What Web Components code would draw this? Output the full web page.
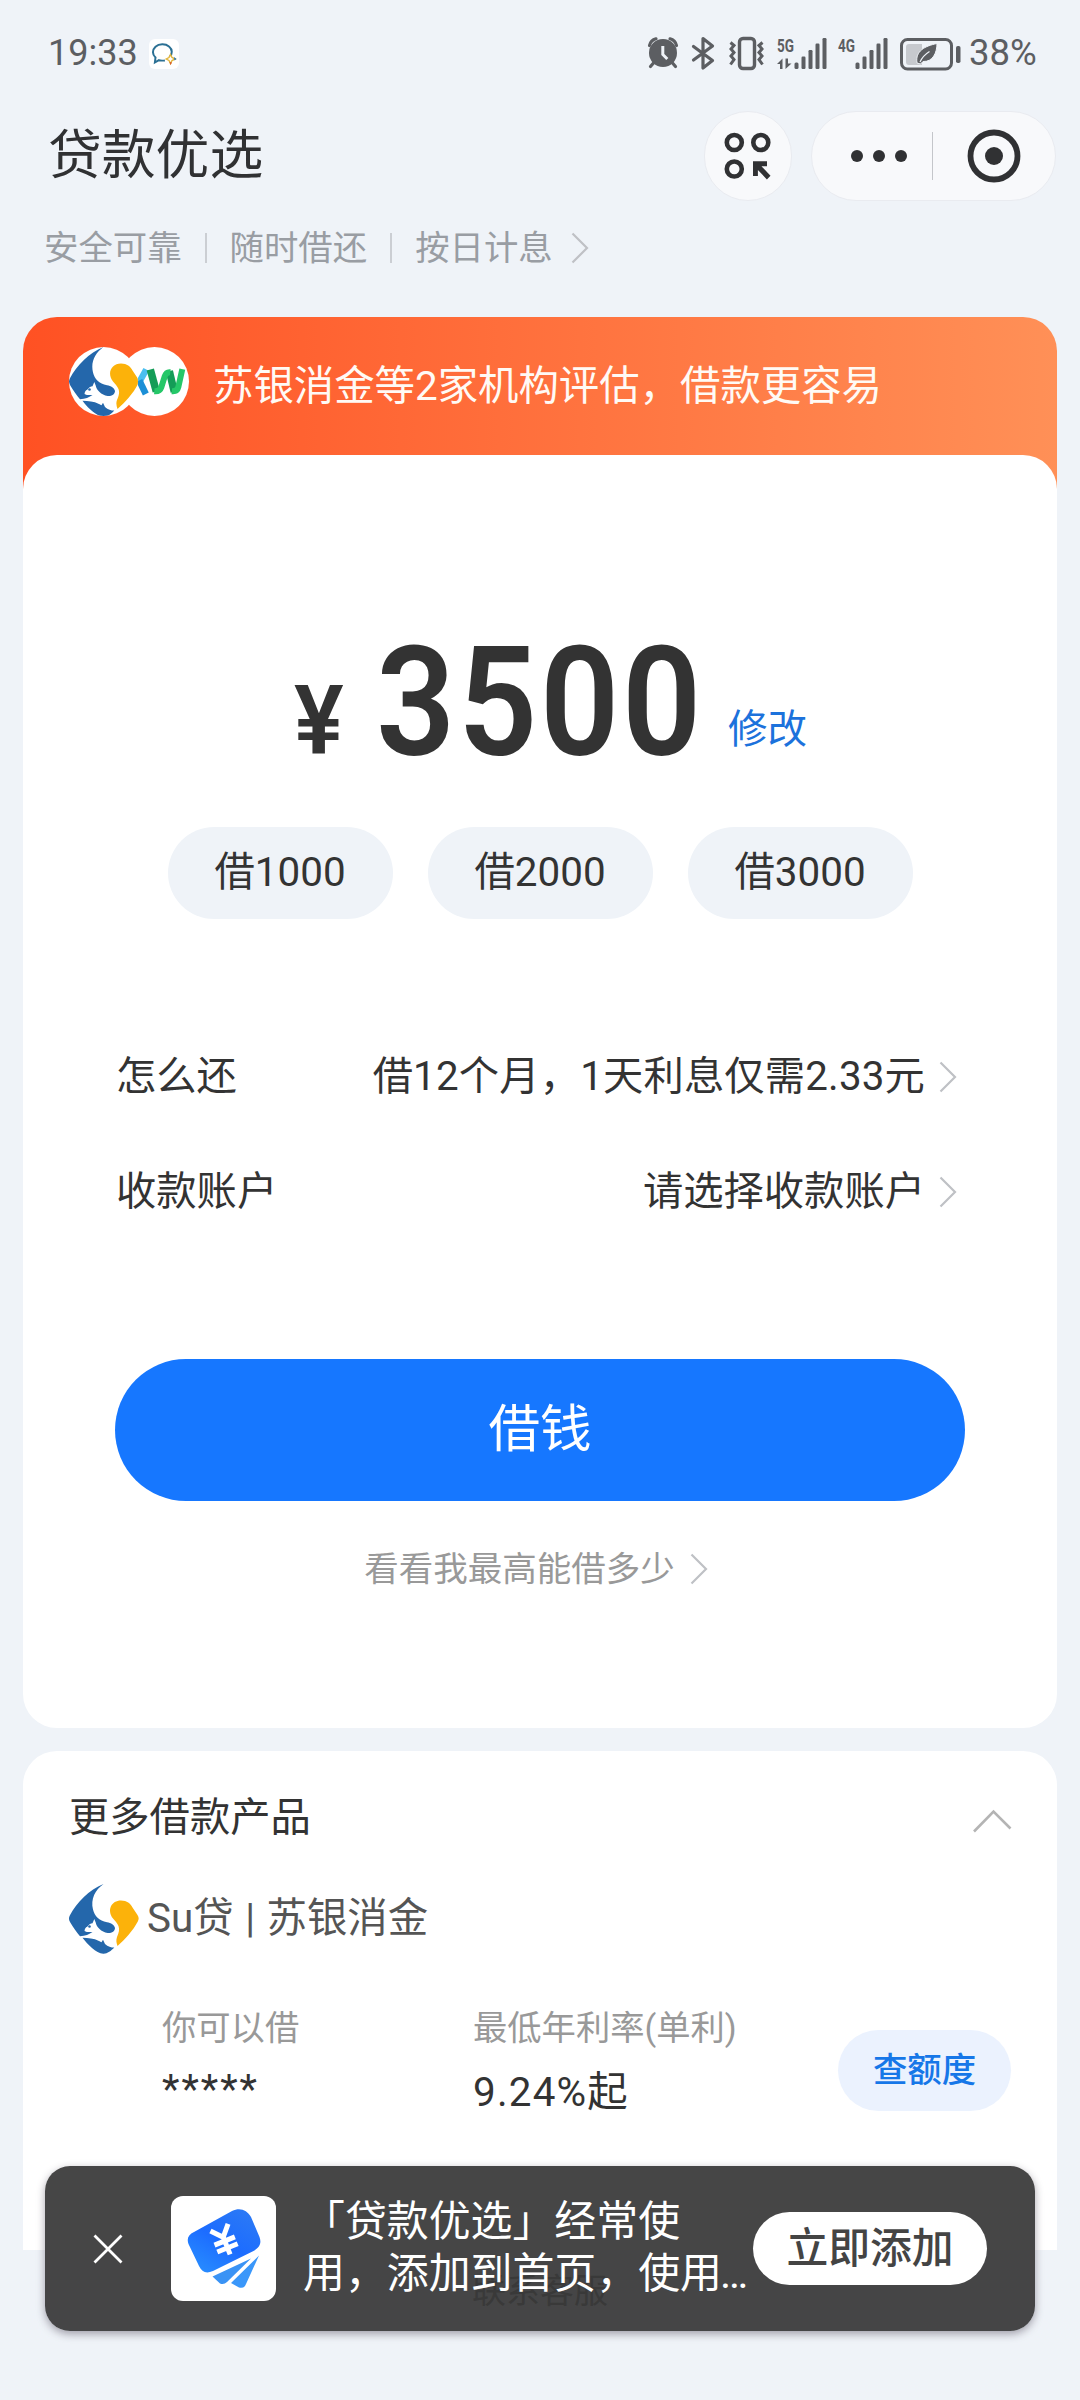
<!DOCTYPE html>
<html lang="zh-CN">
<head>
<meta charset="utf-8">
<title>贷款优选</title>
<style>
html,body{margin:0;padding:0}
body{width:1080px;height:2400px;overflow:hidden;background:#eff3f8;color:#333;font-family:Roboto,"Noto Sans CJK SC",sans-serif}
</style>
</head>
<body>
<loan-app></loan-app>
<script>
const define=(name,css,html)=>customElements.define(name,class extends HTMLElement{
  constructor(){
    super();
    this.attachShadow({mode:'open'}).innerHTML=`<style>*{box-sizing:border-box}:host{display:block;box-sizing:border-box}svg{display:block}${css}</style>${html}`;
  }
});

const bars=`<g fill="#5c5e62"><rect x="17.5" y="26.500" width="4" height="6.500" rx="1.500"/><rect x="24.500" y="20.500" width="4" height="12.500" rx="1.200"/><rect x="31.500" y="14" width="4" height="19" rx="1.200"/><rect x="38.500" y="7.500" width="4" height="25.500" rx="1.200"/><rect x="45.500" y="2" width="4" height="31" rx="1.200"/></g>`;
const netText=t=>`<text x="0" y="15.500" font-family="Roboto" font-weight="700" font-size="18.500" textLength="17" lengthAdjust="spacingAndGlyphs" fill="#5c5e62">${t}</text>`;

const icons={
  chat:[30,30,`<rect width="30" height="30" rx="6" fill="#fff"/><path d="M20.500 18.500c3-3.500 3.200-8-.5-11-3.500-3-10-3-13.500.2-3.600 3.300-3.200 8 0 10.800l-.6 5 4-2.300c2 .6 4 .5 6 .2" fill="none" stroke="#2b7094" stroke-width="2"/><path d="M21.500 15.500l1.500 3 3.200 1.500-3.200 1.500-1.500 3.200-1.500-3.200-2.800-1.500 2.800-1.500z" fill="#fff" stroke="#e2b53c" stroke-width="1.400"/><path d="M25 18l2.500 2-2 1.500z" fill="#2378b8"/><path d="M20.500 23l1 3 1.500-2.500z" fill="#d6582e"/>`],
  alarm:[30,34,`<circle cx="15" cy="17" r="14" fill="#5c5e62"/><path d="M1.500 9.500A9 9 0 0 1 8 2.800M28.500 9.500A9 9 0 0 0 22 2.800" fill="none" stroke="#5c5e62" stroke-width="3.200" stroke-linecap="round"/><path d="M5.500 27l-3 3.500M24.500 27l3 3.500" stroke="#5c5e62" stroke-width="3.200" stroke-linecap="round"/><path d="M14.800 10v8.500l4.500 4.500" fill="none" stroke="#eff3f8" stroke-width="3"/>`],
  bluetooth:[23,34,`<path d="M1.500 10.500l19 14L11 32V2.500l9.500 7.500L1.500 24" fill="none" stroke="#5c5e62" stroke-width="3.200" stroke-linejoin="round" stroke-linecap="round"/>`],
  vibrate:[37,34,`<rect x="11.500" y="2.500" width="15" height="30" rx="3.500" fill="none" stroke="#5c5e62" stroke-width="3.400"/><path d="M2.500 6.500l3.500 3-3 3.500 3 3.500-3 3.500 3 3.500-3.500 5M34.500 6.500l-3.500 3 3 3.500-3 3.500 3 3.500-3 3.500 3.500 5" fill="none" stroke="#5c5e62" stroke-width="3"/>`],
  net5:[50,34,netText('5G')+bars+`<path d="M0 28l5.500-5.500V33H3v-5zM8.500 22.500v10.500l6-5.500h-3.500v-5z" fill="#5c5e62"/>`],
  net4:[50,34,netText('4G')+bars],
  battery:[61,34,`<rect x="1.500" y="3.500" width="50" height="29.500" rx="6" fill="none" stroke="#5c5e62" stroke-width="3"/><path d="M9 8h13v21H9a3 3 0 0 1-3-3V11a3 3 0 0 1 3-3z" fill="#c6c9ce"/><path d="M37 7.500c0 9-4 18.500-14 18l-2.500 2.500-3.500-1c-2-12 8-17 20-19.500z" fill="#5c5e62" stroke="#eff3f8" stroke-width="1"/><path d="M20 26c2-4.500 5.500-8 9.500-10.500" fill="none" stroke="#eff3f8" stroke-width="1.200"/><rect x="56" y="10" width="4.500" height="17" rx="1.800" fill="#5c5e62"/>`],
  scan:[48,48,`<g fill="none" stroke="#303133" stroke-width="4.600"><circle cx="10.300" cy="10.500" r="7.500"/><circle cx="36.800" cy="10.500" r="7.500"/><circle cx="10.300" cy="37" r="7.500"/></g><path d="M29 29.300h14v5h-5.500l9 9.500-3.600 3.600-9-9.500v6H29z" fill="#303133"/>`],
  more:[58,14,`<g fill="#303133"><circle cx="7" cy="7" r="6"/><circle cx="29" cy="7" r="6"/><circle cx="51" cy="7" r="6"/></g>`],
  target:[54,54,`<circle cx="27" cy="27" r="23.500" fill="none" stroke="#303133" stroke-width="5.800"/><circle cx="27" cy="27" r="9" fill="#303133"/>`],
  right:[18,32,`<path d="M1.500 1.500L16 16 1.500 30.500" fill="none" stroke="#bfc1c5" stroke-width="2.200"/>`],
  up:[38,24,`<path d="M1 22.500L20.500 2.500 37.500 19.500" fill="none" stroke="#b4b4b4" stroke-width="2.600"/>`],
  close:[30,30,`<path d="M1.500 1.500l27 27M28.500 1.500l-27 27" stroke="#fff" stroke-width="2.800"/>`],
  suyin:[70,70,`<path d="M34.500 0C20 6 8 18 .8 31.500c-1.300 2.300-1 4.800.5 7C4 43 7.500 48 11 52.300c5-.3 9.500-2 12.500-4.300-3 .2-6 .3-8-1 .3-2 1-3.700 3-4.500 1-1.800 3-3 5-3.200l1.800-4.300 1.400 3.500c.8 4.500 5.500 9.500 12 10.500 4 .3 7.300-1.800 7.300-5-.5-3-4-5-8-5.700C30 36.500 25.500 32 24 25.500 21.500 15 26 6 34.500 0z" fill="#2467ab"/><circle cx="20.500" cy="42.500" r="1.300" fill="#2467ab"/><path d="M13.500 53.800c6 .2 11 .4 16.500 3.200l2.500 1.200 1.500-2.500 2 4.200c3 2.800 6 3.600 9.300 3.700-3.300 3.400-7 6.400-11 6.200C27 69.200 18.500 60.500 13.500 53.800z" fill="#2467ab"/><path d="M52 16.500c6 0 9.500 3 11.500 7l5 7.500c1.500 2.300 1.500 4.200.3 6.500C64 46.500 56.500 55 48.500 62c-1-3-1.700-5.500-.5-9 1.800-4 2.800-7.500 1.500-11-1.200-3-3.500-5-5.500-7.500C37.500 26 42.500 16.500 52 16.500z" fill="#fcb20a"/>`],
  xw:[69,69,`<g transform="translate(-119.200 -347)" fill="none"><path d="M145.500 369.500l-7 12.500" stroke="#4abff0" stroke-width="6.500"/><path d="M138.500 380.500l6.500 13.500" stroke="#1b8fd6" stroke-width="6.500"/><path d="M149.500 369.500l6 22" stroke="#149c57" stroke-width="7.500"/><path d="M168.500 371l5 21" stroke="#149c57" stroke-width="7.500"/><path d="M153.500 391.200q5.500.5 7-4l3.500-11q1.500-4.500 5.500-4" stroke="#25c768" stroke-width="6"/><path d="M171 391.200q5.500.5 6.500-4l4-18" stroke="#25c768" stroke-width="6"/></g>`],
  loan:[105,105,`<defs><linearGradient id="g" x1="0" y1="1" x2=".7" y2="0"><stop offset="0" stop-color="#2a92ff"/><stop offset=".55" stop-color="#1c6cff"/><stop offset="1" stop-color="#2a78f6"/></linearGradient></defs><rect width="105" height="105" rx="12" fill="#fff"/><path d="M41.500 80.500L80 62.500 56 86q-3 3-7 1.500z" fill="#3a93f5"/><path d="M60 87L88 59.500 75 88q-2 5-7 3.500z" fill="#3a97fa"/><path d="M23 36L61 15c8-4 15-1 19 6l8.500 20c2.500 7-.5 11-6 14L42 75c-7 3-11 1-14-5L17.500 48c-2-5.500 0-9.500 5.500-12z" fill="url(#g)"/><g transform="translate(53.500 44.500) rotate(-22)" fill="none" stroke="#fff" stroke-width="5"><path d="M-9.500-14L0-3.500 9.500-14M0-4v19M-11 .5h22M-11 8h22"/></g>`]
};
customElements.define('ui-icon',class extends HTMLElement{
  constructor(){super();this.attachShadow({mode:'open'})}
  connectedCallback(){
    const [w,h,body]=icons[this.getAttribute('name')];
    this.shadowRoot.innerHTML=`<style>:host{display:block;flex:none;width:${w}px;height:${h}px}svg{display:block;overflow:visible}</style><svg width="${w}" height="${h}" viewBox="0 0 ${w} ${h}">${body}</svg>`;
  }
});

define('status-bar',`:host{height:104px;display:flex;align-items:center;padding:1px 43px 0 48px;font-size:36px;line-height:40px;color:#5c5e62}
.time{width:101px}.sys{margin-left:auto;display:flex;align-items:center}.sys ui-icon{margin-right:14px}.sys .n{margin-right:11px}.sys .v{margin-right:12px}.sys .b{margin-right:8px}.pct{width:68px;white-space:nowrap;font-size:36.500px}ui-icon.chat{margin-top:2px}`,
`<div class="time">19:33</div><ui-icon class="chat" name="chat"></ui-icon>
<div class="sys"><ui-icon name="alarm"></ui-icon><ui-icon name="bluetooth" style="margin-right:13px"></ui-icon><ui-icon class="v" name="vibrate"></ui-icon><ui-icon class="n" name="net5"></ui-icon><ui-icon class="v" name="net4"></ui-icon><ui-icon class="b" name="battery"></ui-icon><div class="pct">38%</div></div>`);

define('title-bar',`:host{height:103px;display:flex;align-items:center;padding:0 24px 0 48px}
h1{margin:0 auto 0 0;font-size:53.8px;line-height:70px;font-weight:400;color:#303133}
.round,.pill{height:90px;border-radius:45px;background:#f8f9fb;border:1px solid #e9ebf0;display:flex;align-items:center}
.round{width:88px;justify-content:center}.pill{width:245px;margin-left:19px;padding:0 34px 0 38px;justify-content:space-between}
.pill i{width:1px;height:48px;background:#c4c6ca;margin-left:-11px}`,
`<h1><slot></slot></h1><div class="round"><ui-icon name="scan"></ui-icon></div><div class="pill"><ui-icon name="more"></ui-icon><i></i><ui-icon name="target"></ui-icon></div>`);

define('tag-line',`:host{height:83px;display:flex;align-items:center;padding:0 0 2px 44px;font-size:34.400px;line-height:40px;color:#999da3}
i{width:2px;height:30px;background:#cbced3;margin:0 23px}ui-icon{margin-left:18px}`,
`<span>安全可靠</span><i></i><span>随时借还</span><i></i><span>按日计息</span><ui-icon name="right"></ui-icon>`);

define('offer-banner',`:host{height:138px;display:flex;align-items:center;padding-left:46px;color:#fffaf5;font-size:40.400px;line-height:50px}
.logos{display:flex;margin-bottom:9px}.logos span{width:69px;height:69px;border-radius:50%;background:#fff;overflow:hidden}.logos span+span{margin-left:-18px}
p{margin:2px 0 0 24px}`,
`<div class="logos"><span style="z-index:1"><ui-icon name="suyin"></ui-icon></span><span><ui-icon name="xw"></ui-icon></span></div><p><slot></slot></p>`);

define('loan-amount',`:host{display:flex;align-items:flex-end;height:152px;padding-left:271px}
span,b{display:block;white-space:nowrap;transform-origin:0 50%}
.yen{width:82px;font-size:97px;line-height:97px;font-weight:600;margin-bottom:7.700px;transform:scaleX(.96)}
b{width:352px;font-size:152px;line-height:152px;font-weight:600;letter-spacing:3px;margin-bottom:-1px;transform:scaleX(.913)}
a{font-size:39.500px;line-height:40px;margin-bottom:28px;color:#1c72dc}`,
`<span class="yen">¥</span><b><slot></slot></b><a>修改</a>`);

define('amount-chip',`:host{width:225px;height:92px;border-radius:46px;background:#eff3f8;display:flex;align-items:center;justify-content:center;font-size:40.400px;line-height:50px}`,`<slot></slot>`);

define('info-row',`:host{height:115px;display:flex;align-items:center;justify-content:space-between;font-size:40.300px;line-height:50px}
div{display:flex;align-items:center;gap:14px}::slotted(.tight){letter-spacing:.17px}`,
`<slot name="label"></slot><div><slot></slot><ui-icon name="right"></ui-icon></div>`);

define('primary-button',`:host{height:142px;border-radius:71px;background:#1677ff;color:#fff;display:flex;align-items:center;justify-content:center;font-size:51.600px;line-height:60px}`,`<slot></slot>`);

define('more-link',`:host{height:60px;display:flex;align-items:center;justify-content:center;gap:15px;font-size:34.500px;line-height:44px;color:#999}`,`<slot></slot><ui-icon name="right"></ui-icon>`);

define('loan-card',`:host{margin:27px 23px 0;border-radius:34px 34px 0 0;background:linear-gradient(90deg,#ff5123,#ff9057) no-repeat 0 0/100% 190px}
.body{height:1273px;border-radius:34px;background:#fff;padding-top:171px}
.chips{display:flex;justify-content:center;gap:35px;margin-top:49px}
.rows{padding:0 100px 0 93px;margin-top:100px}primary-button{margin:110px 92px 0}more-link{margin:38px 8px 0 0}`,
`<offer-banner>苏银消金等2家机构评估，借款更容易</offer-banner>
<div class="body"><loan-amount>3500</loan-amount>
<div class="chips"><amount-chip>借1000</amount-chip><amount-chip>借2000</amount-chip><amount-chip>借3000</amount-chip></div>
<div class="rows"><info-row><span slot="label">怎么还</span><span class="tight">借12个月，1天利息仅需2.33元</span></info-row><info-row><span slot="label">收款账户</span><span>请选择收款账户</span></info-row></div>
<primary-button>借钱</primary-button><more-link>看看我最高能借多少</more-link></div>`);

define('product-item',`.name{height:70px;display:flex;align-items:center;gap:8px;color:#555;font-size:40.400px;line-height:50px;word-spacing:1.500px}
.data{display:flex;padding:52px 0 0 93px}.col{width:311px;white-space:nowrap}
small{display:block;font-size:34.300px;line-height:45px;color:#999}p{margin:12px 0 0;font-size:40.400px;line-height:60px;letter-spacing:1.200px}.stars{letter-spacing:2px;margin-top:9px}
.btn{width:173px;height:81px;margin:24px 0 0 auto;padding-bottom:7px;border-radius:41px;background:#ebf2fe;color:#1677e8;font-weight:500;font-size:34.400px;display:flex;align-items:center;justify-content:center}`,
`<div class="name"><ui-icon name="suyin"></ui-icon><span>Su贷 | 苏银消金</span></div>
<div class="data"><div class="col"><small>你可以借</small><p class="stars">*****</p></div><div class="col"><small>最低年利率(单利)</small><p>9.24%起</p></div><div class="btn">查额度</div></div>`);

define('product-list',`:host{height:499px;margin:23px 23px 0;padding:0 46px;background:#fff;border-radius:34px 34px 0 0}
header{height:133px;display:flex;align-items:center;justify-content:space-between;font-size:40.300px;line-height:50px}header ui-icon{margin-top:7px}`,
`<header><span>更多借款产品</span><ui-icon name="up"></ui-icon></header><product-item></product-item>`);

define('service-link',`:host{margin-top:19px;text-align:center;font-size:34px;line-height:44px;color:#777}`,`<slot></slot>`);

define('add-toast',`:host{position:absolute;left:45px;top:2166px;width:990px;height:165px;border-radius:25px;background:rgba(50,50,50,.9);box-shadow:0 3px 8px rgba(40,30,50,.4);display:flex;align-items:center;padding-left:48px;color:#fff}
.app{margin-left:48px}p{margin:-5px 0 0 27px;width:450px;font-size:41.900px;line-height:52px;white-space:nowrap;font-family:"Noto Sans CJK SC",Roboto,sans-serif}
p .dots{font-family:Roboto;letter-spacing:-1px;margin-left:-2px}button{all:unset;width:234px;height:73px;border-radius:37px;background:#fff;color:#444;font-size:41.800px;line-height:74px;text-align:center;font-weight:500}`,
`<ui-icon name="close"></ui-icon><ui-icon class="app" name="loan"></ui-icon><p>「贷款优选」经常使<br>用，添加到首页，使用<span class="dots">…</span></p><button>立即添加</button>`);

define('loan-app',`:host{position:relative;width:1080px;height:2400px;overflow:hidden}`,
`<status-bar></status-bar><title-bar>贷款优选</title-bar><tag-line></tag-line><loan-card></loan-card><product-list></product-list><service-link>联系客服</service-link><add-toast></add-toast>`);
</script>
</body>
</html>
